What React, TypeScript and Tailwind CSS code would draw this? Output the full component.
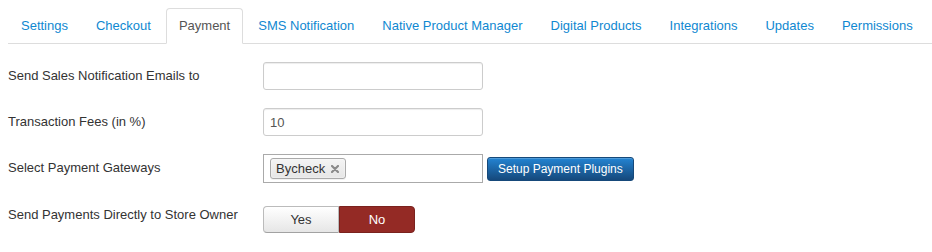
import React from "react";

const tabs = [
  "Settings",
  "Checkout",
  "Payment",
  "SMS Notification",
  "Native Product Manager",
  "Digital Products",
  "Integrations",
  "Updates",
  "Permissions",
];

const Tab = ({ label, active }: { label: string; active?: boolean }) => {
  if (active) {
    return (
      <li className="-mb-px mr-[2px] rounded-t-[4px] border border-[#ddd] border-b-transparent bg-white px-3 py-2 leading-[18px] text-[#555]">
        {label}
      </li>
    );
  }
  return (
    <li className="-mb-px mr-[2px] border border-transparent px-3 py-2 leading-[18px] text-[#0f88d1]">
      {label}
    </li>
  );
};

const Row = ({ label, children }: { label: string; children: React.ReactNode }) => {
  return (
    <div className="mb-[18px] flex">
      <label className="w-[255px] shrink-0 pt-[5px] leading-[18px] text-[#333]">{label}</label>
      <div className="flex items-start">{children}</div>
    </div>
  );
};

export default function App() {
  return (
    <div className="min-h-[252px] bg-white pl-2 text-[13px] font-['Liberation_Sans',Arial,sans-serif]">
      <ul className="mt-2 flex border-b border-[#ddd]">
        {tabs.map((t) => (
          <Tab key={t} label={t} active={t === "Payment"} />
        ))}
      </ul>

      <form className="mt-[18px]">
        <Row label="Send Sales Notification Emails to">
          <input
            type="text"
            className="h-[28px] w-[220px] rounded-[3px] border border-[#ccc] px-[6px] py-1 leading-[18px] text-[#555] shadow-[inset_0_1px_1px_rgba(0,0,0,0.075)] outline-none"
            defaultValue=""
          />
        </Row>

        <Row label="Transaction Fees (in %)">
          <input
            type="text"
            className="h-[28px] w-[220px] rounded-[3px] border border-[#ccc] px-[6px] py-1 leading-[18px] text-[#555] shadow-[inset_0_1px_1px_rgba(0,0,0,0.075)] outline-none"
            defaultValue="10"
          />
        </Row>

        <Row label="Select Payment Gateways">
          <div className="flex h-[29px] w-[220px] items-center border border-[#aaa] bg-white pl-[6px]">
            <span className="flex h-[21px] items-center rounded-[3px] border border-[#aaa] bg-gradient-to-b from-[#f4f4f4] to-[#e6e6e6] pl-[5px] pr-[6px] leading-[13px] text-[#333] shadow-[0_0_2px_#fff_inset,0_1px_0_rgba(0,0,0,0.05)]">
              Bycheck
              <svg width="8" height="8" viewBox="0 0 8 8" className="ml-[6px]">
                <path d="M1 1L7 7M7 1L1 7" stroke="#8a8a8a" strokeWidth="2.2" strokeLinecap="round" />
              </svg>
            </span>
          </div>
          <button
            type="button"
            className="ml-[4px] mt-[3px] h-[24px] rounded-[3px] border border-[#16497a] bg-gradient-to-b from-[#2384d3] to-[#15497c] px-[10px] text-[12px] leading-[18px] text-white shadow-[inset_0_1px_0_rgba(255,255,255,0.2)]"
          >
            Setup Payment Plugins
          </button>
        </Row>

        <Row label="Send Payments Directly to Store Owner">
          <div className="mt-[5px] flex h-[27px]">
            <button
              type="button"
              className="w-[76px] rounded-l-[4px] border border-[#bbb] border-b-[#a2a2a2] bg-gradient-to-b from-white to-[#e6e6e6] leading-[18px] text-[#333]"
            >
              Yes
            </button>
            <button
              type="button"
              className="w-[76px] rounded-r-[4px] border border-[#7a221e] bg-[#942a25] leading-[18px] text-white"
            >
              No
            </button>
          </div>
        </Row>
      </form>
    </div>
  );
}
